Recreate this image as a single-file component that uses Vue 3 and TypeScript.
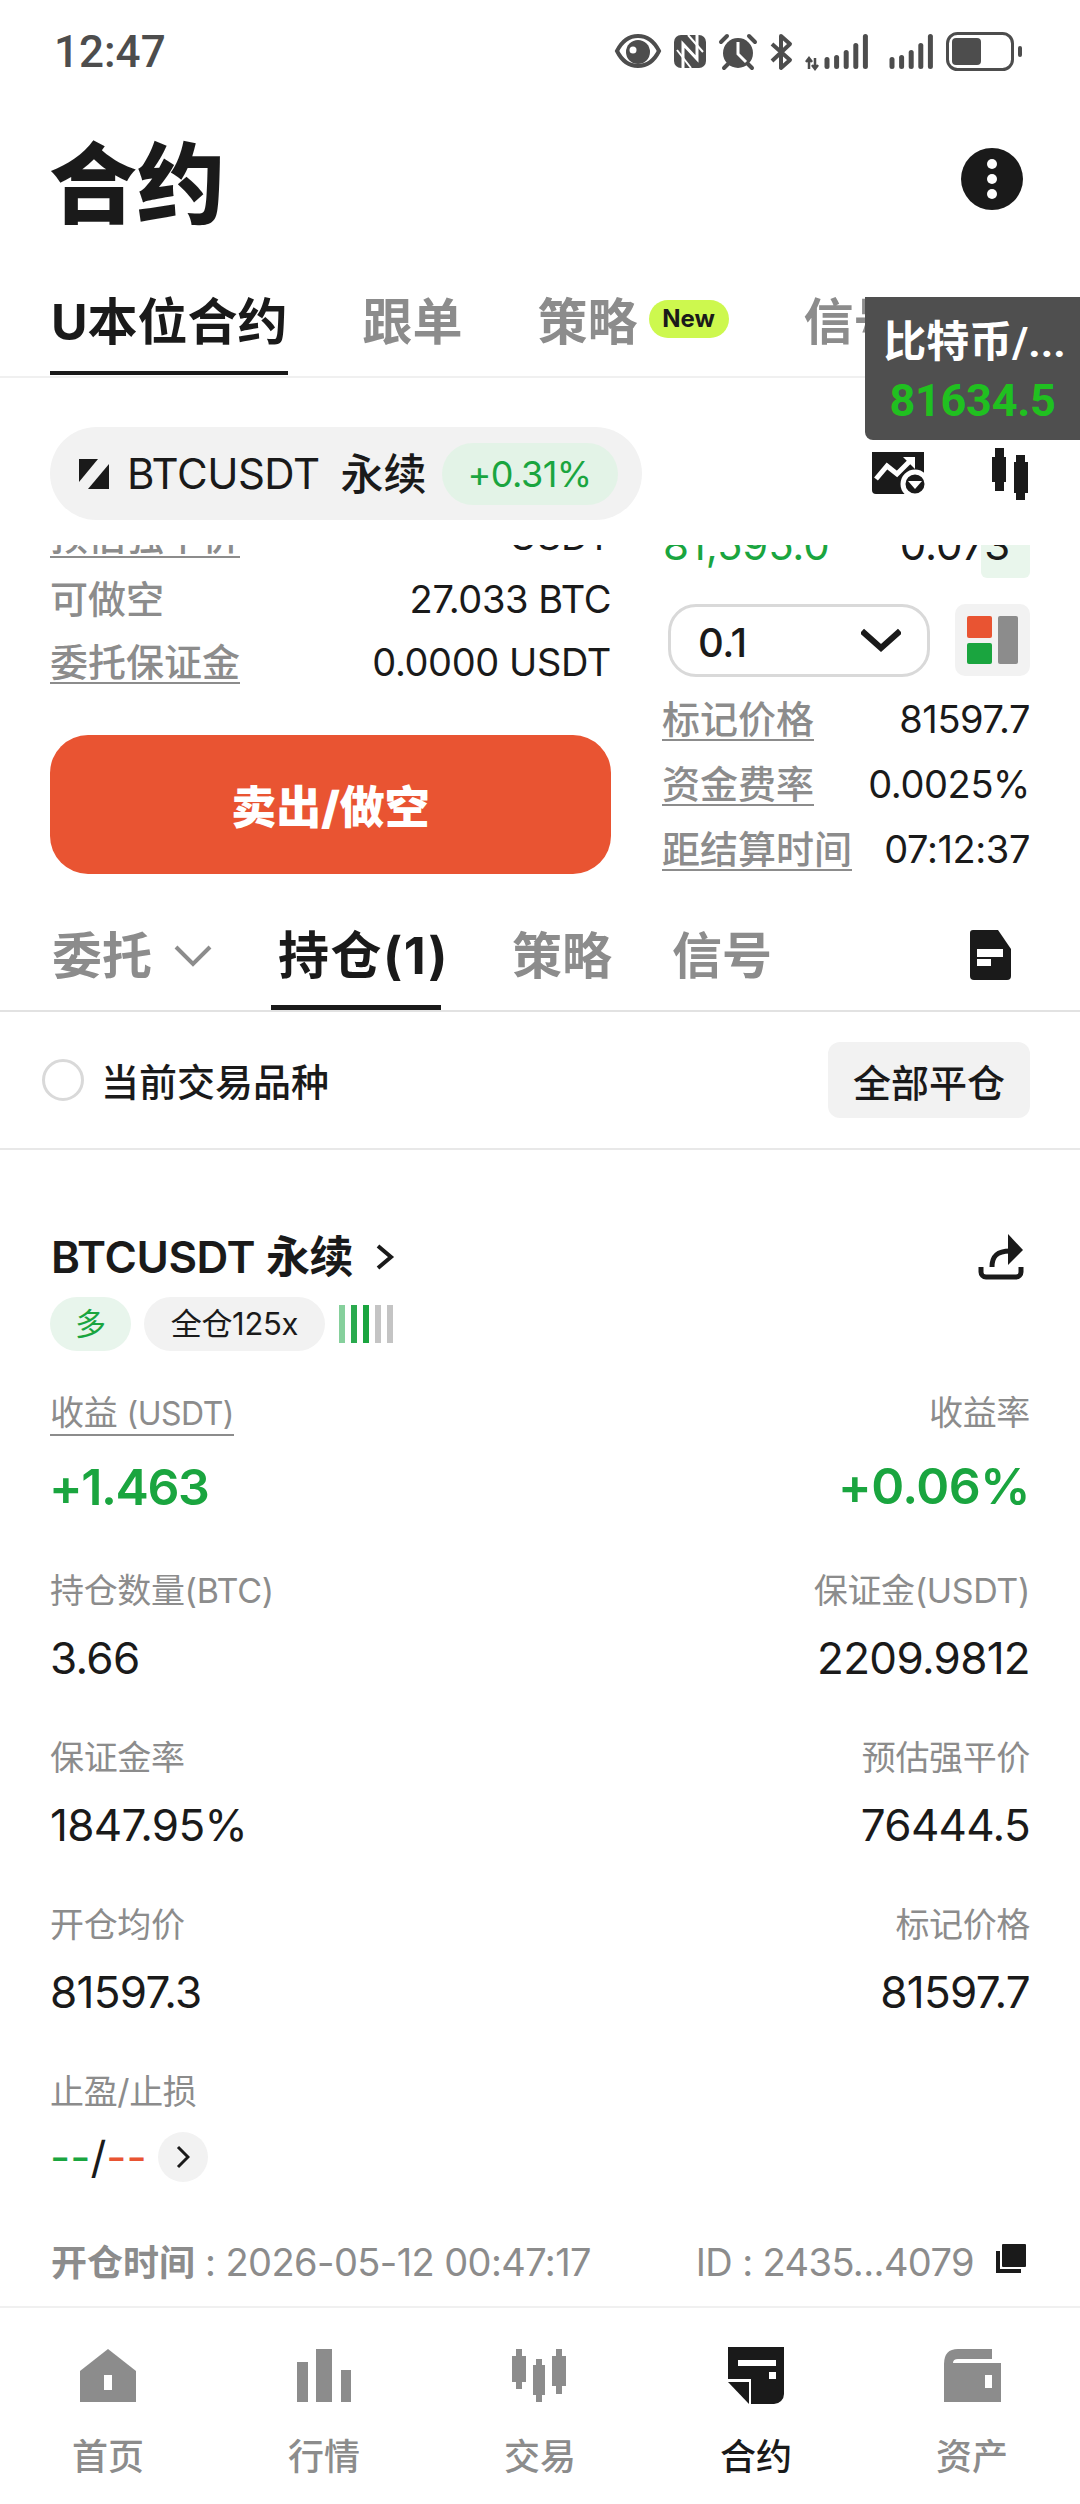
<script setup lang="ts">
interface Stat {
  label: string;
  value: string;
}

const topTabs = ['跟单', '策略'];
const statRows: Stat[][] = [
  [
    { label: '持仓数量(BTC)', value: '3.66' },
    { label: '保证金(USDT)', value: '2209.9812' },
  ],
  [
    { label: '保证金率', value: '1847.95%' },
    { label: '预估强平价', value: '76444.5' },
  ],
  [
    { label: '开仓均价', value: '81597.3' },
    { label: '标记价格', value: '81597.7' },
  ],
];
const sideRows: Stat[] = [
  { label: '标记价格', value: '81597.7' },
  { label: '资金费率', value: '0.0025%' },
  { label: '距结算时间', value: '07:12:37' },
];
const leverBars = ['#86d09c', '#2aaa4e', '#1aa53f', '#c4c4c4', '#c4c4c4'];
const signalTops = [57, 55, 50, 43, 34];
const navItems = [
  { label: '首页', key: 'home' },
  { label: '行情', key: 'market' },
  { label: '交易', key: 'trade' },
  { label: '合约', key: 'futures' },
  { label: '资产', key: 'assets' },
];
</script>

<template>
  <div class="page">
    <div class="status-bar">
      <span class="time">12:47</span>
      <svg class="status-icons" width="415" height="46" viewBox="610 28 415 46" fill="#4d4d4d">
        <path d="M617 51C627 31 649 31 659 51C649 71 627 71 617 51Z" fill="none" stroke="#4d4d4d" stroke-width="4" />
        <circle cx="638" cy="52" r="12" />
        <circle cx="633" cy="50" r="3.5" fill="#fff" />
        <rect x="674" y="35" width="32" height="33" rx="7" />
        <path d="M683 68V44L697 59V35" fill="none" stroke="#fff" stroke-width="3" />
        <path d="M688 35L703 52M677 50L691 68" fill="none" stroke="#fff" stroke-width="2" />
        <circle cx="738" cy="53" r="15" />
        <path d="M738 42V54L746 62" fill="none" stroke="#fff" stroke-width="3" />
        <path d="M721 42L727 36M749 36L755 42M724 68L728 64M748 64L752 68" fill="none" stroke="#4d4d4d" stroke-width="4" stroke-linecap="round" />
        <path d="M772 44L790 60L781 68V36L790 44L772 61" fill="none" stroke="#4d4d4d" stroke-width="4" stroke-linejoin="round" />
        <path d="M809 69V60M806 62L809 58L812 62M815 58V67M812 65L815 69L818 65" fill="none" stroke="#4d4d4d" stroke-width="2.5" />
        <rect v-for="(top, i) in signalTops" :key="'a' + i" :x="824.5 + i * 9.6" :y="top" width="5" :height="69 - top" rx="2.5" />
        <rect v-for="(top, i) in signalTops" :key="'b' + i" :x="889.5 + i * 9.6" :y="top" width="5" :height="69 - top" rx="2.5" />
        <rect x="947.5" y="33.5" width="65" height="36" rx="10" fill="none" stroke="#4d4d4d" stroke-width="3" />
        <rect x="952" y="38" width="29" height="27" rx="4" />
        <rect x="1018" y="46" width="4" height="11" rx="2" />
      </svg>
    </div>

    <header class="title-row">
      <h1>合约</h1>
      <div class="more">
        <i></i><i></i><i></i>
      </div>
    </header>

    <nav class="top-tabs">
      <span class="top-tab active">U本位合约</span>
      <span v-for="tab in topTabs" :key="tab" class="top-tab">{{ tab }}</span>
      <span class="new-badge">New</span>
      <span class="top-tab signal-tab">信号</span>
    </nav>

    <div class="float-ticker">
      <span class="float-name">比特币/...</span>
      <span class="float-price">81634.5</span>
    </div>

    <div class="symbol-row">
      <div class="symbol-pill">
        <svg width="30" height="30" viewBox="0 0 30 30">
          <path d="M0 0H19L0 23Z" fill="#1a1a1a" />
          <path d="M30 5V30H9Z" fill="#1a1a1a" />
        </svg>
        <span class="symbol-name">BTCUSDT</span>
        <span class="symbol-kind">永续</span>
        <span class="symbol-change">+0.31%</span>
      </div>
      <div class="symbol-tools">
        <svg width="56" height="44" viewBox="0 0 56 44">
          <path d="M0 0H52V30L36 42H4a4 4 0 0 1-4-4Z" fill="#1a1a1a" />
          <path d="M4 27L15 14L25 22L38 9" fill="none" stroke="#fff" stroke-width="5" />
          <path d="M31 5H43V17Z" fill="#fff" />
          <circle cx="43" cy="32" r="12" fill="#1a1a1a" stroke="#fff" stroke-width="5" />
          <path d="M36 29H50L43 37Z" fill="#fff" />
        </svg>
        <svg width="36" height="52" viewBox="0 0 36 52" fill="#1a1a1a">
          <rect x="3" y="0" width="9" height="43" />
          <rect x="0" y="9" width="14" height="25" />
          <rect x="24" y="7" width="9" height="45" />
          <rect x="22" y="14" width="14" height="31" />
        </svg>
      </div>
    </div>

    <section class="trade-window">
      <div class="order-col">
        <div class="info-row">
          <span class="dash-label">预估强平价</span>
          <span>USDT</span>
        </div>
        <div class="info-row">
          <span class="plain-label">可做空</span>
          <span>27.033 BTC</span>
        </div>
        <div class="info-row">
          <span class="dash-label">委托保证金</span>
          <span>0.0000 USDT</span>
        </div>
        <button class="sell-btn">卖出/做空</button>
      </div>

      <div class="book-col">
        <div class="book-row">
          <span class="depth"></span>
          <span class="book-price">81,595.0</span>
          <span class="book-size">0.073</span>
        </div>
        <div class="book-tools">
          <div class="step-select">
            <span>0.1</span>
            <svg width="40" height="24" viewBox="0 0 40 24">
              <path d="M1 3L20 20L39 3" fill="none" stroke="#1a1a1a" stroke-width="6" />
            </svg>
          </div>
          <div class="layout-btn">
            <div class="layout-stack">
              <i class="red"></i>
              <i class="green"></i>
            </div>
            <i class="grey"></i>
          </div>
        </div>
        <div v-for="row in sideRows" :key="row.label" class="info-row side-row">
          <span class="dash-label">{{ row.label }}</span>
          <span>{{ row.value }}</span>
        </div>
      </div>
    </section>

    <nav class="sub-tabs">
      <span class="sub-tab">委托</span>
      <svg class="sub-chevron" width="38" height="22" viewBox="0 0 38 22">
        <path d="M2 2L19 19L36 2" fill="none" stroke="#8c8c8c" stroke-width="4" />
      </svg>
      <span class="sub-tab active">持仓(1)</span>
      <span class="sub-tab">策略</span>
      <span class="sub-tab">信号</span>
      <svg class="doc-icon" width="42" height="50" viewBox="0 0 42 50">
        <path d="M3 0H28L41 19V46a4 4 0 0 1-4 4H4a4 4 0 0 1-4-4V3a3 3 0 0 1 3-3Z" fill="#1a1a1a" />
        <rect x="7" y="19" width="26" height="8" fill="#fff" />
        <rect x="7" y="29" width="14" height="7" fill="#fff" />
      </svg>
    </nav>

    <div class="filter-row">
      <label class="filter-check">
        <i></i>
        <span>当前交易品种</span>
      </label>
      <button class="close-all">全部平仓</button>
    </div>

    <section class="position">
      <div class="pos-head">
        <span class="pos-name">BTCUSDT <b>永续</b></span>
        <svg width="20" height="28" viewBox="0 0 20 28">
          <path d="M3 3L16 14L3 25" fill="none" stroke="#1a1a1a" stroke-width="4" />
        </svg>
        <svg class="share" width="46" height="46" viewBox="0 0 46 46">
          <path d="M3 33V38a5 5 0 0 0 5 5H38a5 5 0 0 0 5-5V33" fill="none" stroke="#1a1a1a" stroke-width="5" />
          <path d="M14 33C14 23 18 17 32 17" fill="none" stroke="#1a1a1a" stroke-width="5" />
          <path d="M30 0L45 16L30 31Z" fill="#1a1a1a" />
        </svg>
      </div>
      <div class="pos-tags">
        <span class="tag long">多</span>
        <span class="tag">全仓125x</span>
        <span class="lever-bars">
          <i v-for="(c, i) in leverBars" :key="i" :style="{ background: c }"></i>
        </span>
      </div>

      <div class="pnl-row">
        <div class="stat">
          <span class="stat-label pnl-label">收益 <small>(USDT)</small></span>
          <span class="pnl pnl-left">+1.463</span>
        </div>
        <div class="stat right">
          <span class="stat-label">收益率</span>
          <span class="pnl">+0.06%</span>
        </div>
      </div>

      <div v-for="(row, i) in statRows" :key="i" class="stat-row">
        <div v-for="(item, j) in row" :key="item.label" class="stat" :class="{ right: j === 1 }">
          <span class="stat-label">{{ item.label }}</span>
          <span class="stat-value">{{ item.value }}</span>
        </div>
      </div>

      <div class="stat-row">
        <div class="stat">
          <span class="stat-label">止盈/止损</span>
          <div class="tpsl">
            <span class="tp">--</span><span class="slash">/</span><span class="sl">--</span>
            <span class="tpsl-btn">
              <svg width="14" height="24" viewBox="0 0 14 24">
                <path d="M2 2L12 12L2 22" fill="none" stroke="#1a1a1a" stroke-width="3" />
              </svg>
            </span>
          </div>
        </div>
      </div>

      <div class="pos-foot">
        <span><b>开仓时间</b> : 2026-05-12 00:47:17</span>
        <span class="pos-id">
          ID : 2435...4079
          <svg width="30" height="30" viewBox="0 0 30 30">
            <rect x="6" y="0" width="24" height="23" rx="1" fill="#1a1a1a" />
            <path d="M2 7V27H25" fill="none" stroke="#1a1a1a" stroke-width="4" />
          </svg>
        </span>
      </div>
    </section>

    <nav class="bottom-nav">
      <div v-for="item in navItems" :key="item.key" class="nav-item" :class="{ active: item.key === 'futures' }">
        <svg v-if="item.key === 'home'" width="58" height="54" viewBox="0 0 58 54" fill="#8c8c8c">
          <path d="M29 0L57 22V53H1V22Z" />
          <rect x="25" y="26" width="8" height="15" fill="#fff" />
        </svg>
        <svg v-else-if="item.key === 'market'" width="58" height="54" viewBox="0 0 58 54" fill="#8c8c8c">
          <rect x="2" y="13" width="11" height="40" />
          <rect x="21" y="0" width="16" height="53" />
          <rect x="46" y="21" width="10" height="32" />
        </svg>
        <svg v-else-if="item.key === 'trade'" width="58" height="54" viewBox="0 0 58 54" fill="#8c8c8c">
          <rect x="5" y="0" width="6" height="40" />
          <rect x="1" y="7" width="14" height="26" />
          <rect x="25" y="10" width="6" height="43" />
          <rect x="22" y="16" width="12" height="30" />
          <rect x="45" y="0" width="6" height="45" />
          <rect x="41" y="7" width="14" height="30" />
        </svg>
        <svg v-else-if="item.key === 'futures'" class="futures-icon" width="58" height="58" viewBox="0 0 58 58" fill="#1a1a1a">
          <path d="M1 0H57V47a10 10 0 0 1-10 10H24V32H1Z" />
          <path d="M1 35H22V57Z" />
          <rect x="11" y="13" width="38" height="6" fill="#fff" />
          <rect x="42" y="25" width="7" height="7" fill="#fff" />
        </svg>
        <svg v-else width="58" height="54" viewBox="0 0 58 54" fill="#8c8c8c">
          <path d="M1 15Q1 0 15 0H49V10H15Q10 10 10 14H58V53H1Z" />
          <rect x="42" y="26" width="7" height="13" fill="#fff" />
        </svg>
        <span>{{ item.label }}</span>
      </div>
    </nav>
  </div>
</template>

<style scoped>
.page {
  --ink: #1a1a1a;
  --grey: #8c8c8c;
  --green: #1aa53f;
  --red: #e95432;
  position: relative;
  width: 1080px;
  height: 2504px;
  overflow: hidden;
  background: #fff;
  color: var(--ink);
  font-family: Inter, "Noto Sans CJK SC", sans-serif;
}

i {
  display: block;
}

.status-bar {
  height: 104px;
  display: flex;
  justify-content: space-between;
  align-items: flex-start;
  padding: 28px 55px 0 54px;
  box-sizing: border-box;
}

.time {
  font-family: Roboto, sans-serif;
  font-size: 44px;
  line-height: 48px;
  font-weight: 500;
  color: #4d4d4d;
}

.title-row {
  height: 160px;
  display: flex;
  justify-content: space-between;
  align-items: center;
  padding: 0 57px 0 49px;
}

.title-row h1 {
  margin: 0;
  font-size: 88px;
  line-height: 100px;
  font-weight: 900;
}

.more {
  width: 62px;
  height: 62px;
  margin-top: -10px;
  border-radius: 50%;
  background: var(--ink);
  display: flex;
  flex-direction: column;
  align-items: center;
  justify-content: center;
  gap: 5px;
}

.more i {
  width: 10px;
  height: 10px;
  border-radius: 50%;
  background: #fff;
}

.top-tabs {
  height: 112px;
  display: flex;
  align-items: flex-start;
  padding: 0 0 0 50px;
  border-bottom: 2px solid #f0f0f0;
  white-space: nowrap;
}

.top-tab {
  height: 75px;
  padding-top: 32px;
  margin-right: 75px;
  font-size: 50px;
  line-height: 52px;
  font-weight: 700;
  color: var(--grey);
}

.top-tab.active {
  color: var(--ink);
  border-bottom: 4px solid var(--ink);
  padding-left: 1px;
  padding-right: 0;
}

.top-tab:nth-child(3) {
  margin-right: 11px;
}

.new-badge {
  margin-top: 36px;
  width: 80px;
  height: 38px;
  margin-right: 75px;
  border-radius: 19px;
  background: #cdf84e;
  color: var(--ink);
  font-size: 24px;
  line-height: 38px;
  font-weight: 700;
  text-align: center;
}

.float-ticker {
  position: absolute;
  top: 297px;
  right: 0;
  width: 215px;
  height: 143px;
  background: #4f4f4f;
  border-bottom-left-radius: 8px;
  display: flex;
  flex-direction: column;
  align-items: center;
  font-family: Roboto, "Noto Sans CJK SC", sans-serif;
  font-weight: 700;
}

.float-name {
  margin-top: 17px;
  padding-left: 4px;
  font-size: 43px;
  line-height: 56px;
  color: #fff;
  white-space: nowrap;
}

.float-price {
  margin-top: 4px;
  font-size: 45px;
  line-height: 54px;
  letter-spacing: -0.3px;
  color: #20c020;
}

.symbol-row {
  height: 167px;
  box-sizing: border-box;
  padding: 49px 52px 0 50px;
  display: flex;
  align-items: flex-start;
  justify-content: space-between;
}

.symbol-pill {
  width: 592px;
  height: 93px;
  border-radius: 47px;
  background: #f2f2f2;
  display: flex;
  align-items: center;
  padding-left: 29px;
  box-sizing: border-box;
}

.symbol-name {
  margin-left: 18px;
  font-size: 42px;
  letter-spacing: -0.5px;
  line-height: 50px;
}

.symbol-kind {
  margin-left: 21px;
  font-size: 43px;
  line-height: 50px;
  font-weight: 500;
}

.symbol-change {
  margin-left: 15px;
  width: 176px;
  height: 62px;
  border-radius: 31px;
  background: #e3f3e7;
  color: var(--green);
  font-size: 36px;
  letter-spacing: -0.5px;
  line-height: 62px;
  text-align: center;
}

.symbol-tools {
  display: flex;
  align-items: center;
  gap: 64px;
  margin-top: 21px;
}

.trade-window {
  height: 354px;
  padding: 0 50px;
  display: flex;
  gap: 52px;
  overflow: hidden;
  font-size: 38px;
  letter-spacing: -0.4px;
}

.order-col {
  width: 561px;
  margin-top: -41px;
  flex: none;
}

.book-col {
  width: 367px;
  margin-top: -36px;
  flex: none;
}

.info-row {
  height: 63px;
  display: flex;
  justify-content: space-between;
  align-items: center;
  line-height: 40px;
}

.dash-label,
.plain-label {
  color: var(--grey);
  font-weight: 500;
  letter-spacing: 0;
}

.dash-label {
  border-bottom: 2px solid var(--grey);
  margin-bottom: -2px;
}

.sell-btn {
  display: block;
  width: 100%;
  height: 139px;
  margin-top: 42px;
  border: none;
  border-radius: 38px;
  background: var(--red);
  color: #fff;
  font-family: inherit;
  font-size: 45px;
  font-weight: 900;
}

.book-row {
  position: relative;
  height: 70px;
  display: flex;
  padding-top: 6px;
  box-sizing: border-box;
  font-size: 42px;
  letter-spacing: -0.2px;
  line-height: 60px;
}

.depth {
  position: absolute;
  top: 0;
  bottom: 1px;
  right: 0;
  width: 49px;
  border-radius: 0 0 6px 6px;
  background: #e9f6ec;
}

.book-price {
  position: relative;
  color: var(--green);
}

.book-size {
  position: relative;
  margin-left: auto;
  margin-right: 20px;
}

.book-tools {
  margin-top: 25px;
  height: 73px;
  display: flex;
  justify-content: space-between;
  padding-left: 5px;
}

.step-select {
  width: 262px;
  box-sizing: border-box;
  border: 3px solid #d9d9d9;
  border-radius: 28px;
  display: flex;
  align-items: center;
  justify-content: space-between;
  padding: 4px 26px 0 27px;
  font-size: 40px;
  font-weight: 500;
}

.step-select svg {
  margin-top: -6px;
}

.layout-btn {
  width: 75px;
  height: 72px;
  box-sizing: border-box;
  padding: 12px;
  border-radius: 10px;
  background: #f2f2f2;
  display: flex;
  gap: 6px;
}

.layout-stack {
  flex: 1;
  display: flex;
  flex-direction: column;
  gap: 5px;
}

.layout-stack i {
  flex: 1;
  border-radius: 2px;
}

.red {
  background: var(--red);
}

.green {
  background: var(--green);
}

.grey {
  width: 20px;
  border-radius: 2px;
  background: var(--grey);
}

.side-row {
  height: 65px;
  margin-left: -1px;
}

.side-row:nth-child(3) {
  margin-top: 9px;
}

.sub-tabs {
  height: 111px;
  display: flex;
  align-items: flex-start;
  padding-left: 52px;
  border-bottom: 2px solid #e2e2e2;
}

.sub-tab {
  padding-top: 31px;
  height: 75px;
  margin-right: 60px;
  font-size: 50px;
  line-height: 52px;
  font-weight: 700;
  color: var(--grey);
}

.sub-tab:first-child {
  margin-right: 22px;
}

.sub-chevron {
  margin-top: 46px;
  margin-right: 66px;
}

.sub-tab.active {
  color: var(--ink);
  padding: 31px 0 0 7px;
  margin-left: -7px;
  margin-right: 71px;
  width: 163px;
  letter-spacing: 1.5px;
  font-size: 51px;
  border-bottom: 5px solid var(--ink);
  white-space: nowrap;
}

.doc-icon {
  margin-left: auto;
  margin-right: 68px;
  margin-top: 31px;
}

.filter-row {
  height: 136px;
  border-bottom: 2px solid #e8e8e8;
  display: flex;
  align-items: center;
  justify-content: space-between;
  padding: 0 50px 0 42px;
}

.filter-check {
  display: flex;
  align-items: center;
  gap: 17px;
  font-size: 38px;
  font-weight: 500;
}

.filter-check span {
  margin-top: -2px;
}

.filter-check i {
  width: 42px;
  height: 42px;
  box-sizing: border-box;
  border: 3px solid #d9d9d9;
  border-radius: 50%;
}

.close-all {
  width: 202px;
  height: 76px;
  border: none;
  border-radius: 12px;
  background: #f2f2f2;
  color: var(--ink);
  font-family: inherit;
  font-size: 38px;
  font-weight: 500;
}

.position {
  padding: 80px 50px 0;
  height: 1158px;
  box-sizing: border-box;
  border-bottom: 2px solid #f0f0f0;
}

.pos-head {
  height: 54px;
  display: flex;
  align-items: center;
  padding-left: 1px;
}

.pos-name {
  font-size: 44px;
  line-height: 54px;
  font-weight: 600;
  letter-spacing: -0.4px;
  margin-right: 22px;
}

.pos-name b {
  font-weight: 700;
}

.share {
  margin-left: auto;
  margin-right: 6px;
}

.pos-tags {
  margin-top: 13px;
  height: 54px;
  display: flex;
  align-items: center;
  gap: 13px;
}

.tag {
  height: 54px;
  padding: 0 27px;
  border-radius: 27px;
  background: #f2f2f2;
  font-size: 31px;
  line-height: 54px;
  letter-spacing: -0.3px;
}

.tag.long {
  padding: 0 25px;
  background: #e8f5ec;
  color: var(--green);
}

.lever-bars {
  display: flex;
  gap: 6px;
  margin-left: 1px;
}

.lever-bars i {
  width: 6px;
  height: 38px;
}

.pnl-row {
  margin-top: 42px;
  display: flex;
  justify-content: space-between;
}

.pnl-row .stat {
  gap: 23px;
}

.stat-row {
  margin-top: 54px;
  display: flex;
  justify-content: space-between;
}

.stat-row + .stat-row {
  margin-top: 55px;
}

.stat {
  display: flex;
  flex-direction: column;
  gap: 22px;
}

.stat.right {
  align-items: flex-end;
}

.stat-label {
  font-size: 34px;
  line-height: 40px;
  color: var(--grey);
  letter-spacing: -0.35px;
}

.pnl-label {
  align-self: flex-start;
  border-bottom: 2px solid var(--grey);
  margin-bottom: -2px;
}

.pnl-label small {
  font-size: 32px;
  letter-spacing: -0.5px;
}

.pnl {
  font-size: 50px;
  line-height: 60px;
  font-weight: 600;
  color: var(--green);
  letter-spacing: -0.5px;
}

.pnl-left {
  letter-spacing: -1.4px;
  margin-left: -1px;
}

.stat-value {
  font-size: 44px;
  line-height: 50px;
  letter-spacing: -0.7px;
}

.tpsl {
  height: 50px;
  display: flex;
  align-items: center;
  font-size: 44px;
  line-height: 50px;
  margin-top: -2px;
}

.tp {
  color: var(--green);
}

.sl {
  color: var(--red);
}

.tpsl-btn {
  margin-left: 11px;
  width: 50px;
  height: 50px;
  border-radius: 50%;
  background: #f2f2f2;
  display: flex;
  align-items: center;
  justify-content: center;
}

.pos-foot {
  margin-top: 60px;
  height: 40px;
  display: flex;
  justify-content: space-between;
  align-items: center;
  font-size: 38px;
  line-height: 40px;
  color: var(--grey);
  letter-spacing: -0.6px;
  padding-left: 1px;
}

.pos-foot b {
  font-weight: 700;
  font-size: 36px;
  letter-spacing: 0;
}

.pos-id {
  display: flex;
  align-items: center;
  gap: 22px;
  margin-right: 4px;
}

.pos-id svg {
  margin-top: -6px;
}

.bottom-nav {
  display: grid;
  grid-template-columns: repeat(5, 216px);
  padding-top: 41px;
}

.nav-item {
  display: flex;
  flex-direction: column;
  align-items: center;
  height: 140px;
  color: var(--grey);
  font-size: 36px;
  font-weight: 500;
}

.futures-icon {
  margin-top: -2px;
  margin-bottom: -2px;
}

.nav-item span {
  margin-top: 31px;
  line-height: 46px;
}

.nav-item.active {
  color: var(--ink);
}
</style>

<style>
html,
body {
  margin: 0;
  background: #fff;
}
</style>
